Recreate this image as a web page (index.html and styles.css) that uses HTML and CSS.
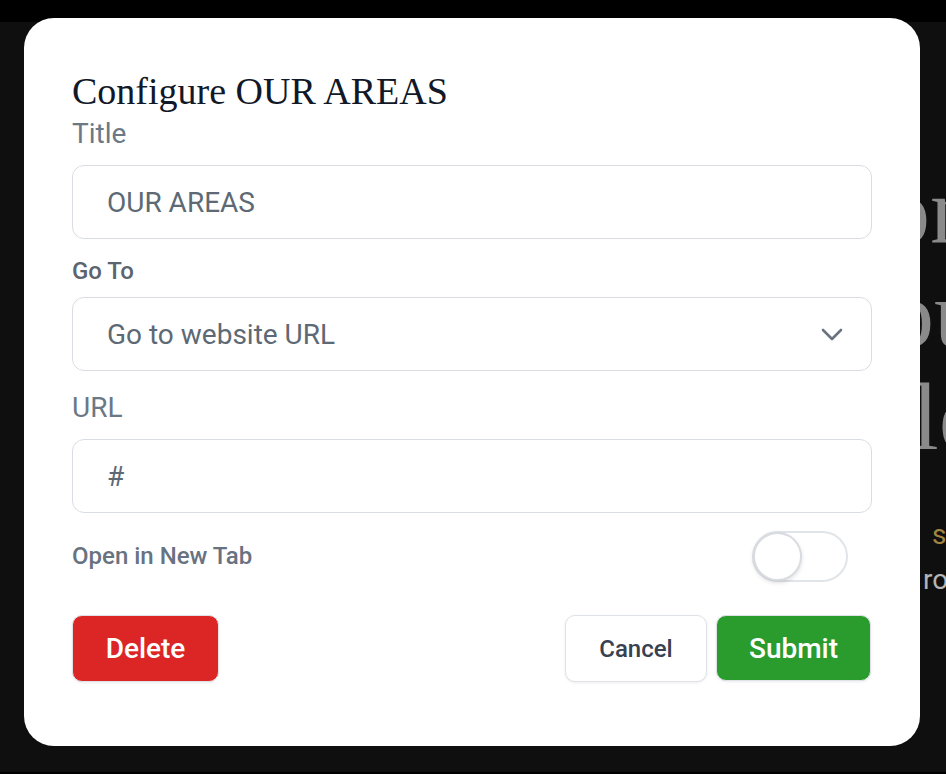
FILE: index.html
```html
<!DOCTYPE html>
<html lang="en">
<head>
<meta charset="utf-8">
<title>Configure OUR AREAS</title>
<link rel="stylesheet" href="styles.css">
</head>
<body>
<div class="page">
  <div class="hero">
    <div class="hero-line l1">only</div>
    <div class="hero-line l2">our</div>
    <div class="hero-line l3">leading</div>
  </div>
  <div class="tag">services</div>
  <div class="sub">roads</div>
</div>

<div class="modal">
  <h2 class="modal-title">Configure OUR AREAS</h2>

  <label class="label label-lg">Title</label>
  <div class="field">OUR AREAS</div>

  <label class="label label-sm">Go To</label>
  <div class="field select">
    <span>Go to website URL</span>
    <svg class="chev" width="22" height="13" viewBox="0 0 22 13"><path d="M2 2 L11 11 L20 2" fill="none" stroke="#6b7280" stroke-width="2.6" stroke-linecap="round" stroke-linejoin="round"/></svg>
  </div>

  <label class="label label-lg">URL</label>
  <div class="field">#</div>

  <div class="toggle-row">
    <span class="label-sm toggle-label">Open in New Tab</span>
    <span class="toggle"><span class="knob"></span></span>
  </div>

  <div class="actions">
    <button class="btn btn-delete">Delete</button>
    <div class="actions-right">
      <button class="btn btn-cancel">Cancel</button>
      <button class="btn btn-submit">Submit</button>
    </div>
  </div>
</div>
</body>
</html>
```

FILE: styles.css
```css
* { box-sizing: border-box; }
html, body { margin: 0; padding: 0; }
body {
  background: #000;
  width: 946px;
  height: 774px;
  overflow: hidden;
  font-family: Roboto, "Liberation Sans", sans-serif;
}

.page {
  margin-top: 22px;
  height: 750px;
  background: #0f0f0f;
  padding-top: 137px;
  overflow: hidden;
}
.hero-line {
  font-family: "Liberation Serif", serif;
  font-size: 96px;
  line-height: 103px;
  color: #8a8a8a;
  white-space: nowrap;
}
.l1 { margin-left: 882px; }
.l2 { margin-left: 886px; }
.l3 { margin-left: 912px; }
.tag {
  margin-top: 47px;
  margin-left: 932px;
  font-size: 28px;
  line-height: 40px;
  color: #a38540;
  white-space: nowrap;
}
.sub {
  margin-top: 5px;
  margin-left: 923px;
  font-size: 28px;
  line-height: 40px;
  color: #b5b5b5;
  white-space: nowrap;
}

.modal {
  position: fixed;
  top: 18px;
  left: 24px;
  width: 896px;
  height: 728px;
  background: #fff;
  border-radius: 30px;
  padding: 51px 48px 0 48px;
  display: flex;
  flex-direction: column;
}
.modal-title {
  margin: 0 0 2px 0;
  font-family: "Liberation Serif", serif;
  font-weight: 400;
  font-size: 38px;
  line-height: 45px;
  color: #111827;
}
.label { display: block; }
.label-lg {
  font-size: 28px;
  line-height: 36px;
  color: #6b7885;
  margin-bottom: 13px;
}
.label-sm {
  font-size: 24px;
  line-height: 32px;
  font-weight: 500;
  color: #5b6570;
}
.label.label-sm { margin-top: 16px; margin-bottom: 10px; }
.field + .label-lg { margin-top: 19px; }

.field {
  height: 74px;
  border: 1px solid #d9dde2;
  border-radius: 12px;
  padding: 0 28px 0 34px;
  display: flex;
  align-items: center;
  font-size: 28px;
  color: #5d6974;
}
.select { justify-content: space-between; }
.chev { display: block; }

.toggle-row {
  margin-top: 18px;
  height: 50px;
  display: flex;
  align-items: center;
  justify-content: space-between;
  padding-right: 24px;
}
.toggle-label { color: #687280; }
.toggle {
  position: relative;
  width: 96px;
  height: 51px;
  border: 2px solid #e1e4e8;
  border-radius: 26px;
  background: #fff;
}
.knob {
  position: absolute;
  left: -1px;
  top: -1px;
  width: 49px;
  height: 49px;
  border-radius: 50%;
  background: #fff;
  border: 2px solid #d8dbe0;
  box-shadow: 0 2px 4px rgba(0,0,0,0.12);
}

.actions {
  margin-top: 34px;
  display: flex;
  justify-content: space-between;
  align-items: flex-start;
}
.actions-right { display: flex; gap: 9px; margin-right: 1px; }
.btn {
  font-family: Roboto, "Liberation Sans", sans-serif;
  height: 67px;
  border-radius: 10px;
  border: 1px solid #dfe2e7;
  font-weight: 500;
  padding: 0;
  box-shadow: 0 1px 3px rgba(0,0,0,0.08);
}
.btn-delete {
  width: 147px;
  background: #dc2626;
  color: #fff;
  font-size: 28px;
}
.btn-cancel {
  width: 142px;
  background: #fff;
  color: #374151;
  font-size: 24px;
}
.btn-submit {
  width: 155px;
  height: 66px;
  background: #2a9c2e;
  color: #fff;
  font-size: 28px;
}
```
